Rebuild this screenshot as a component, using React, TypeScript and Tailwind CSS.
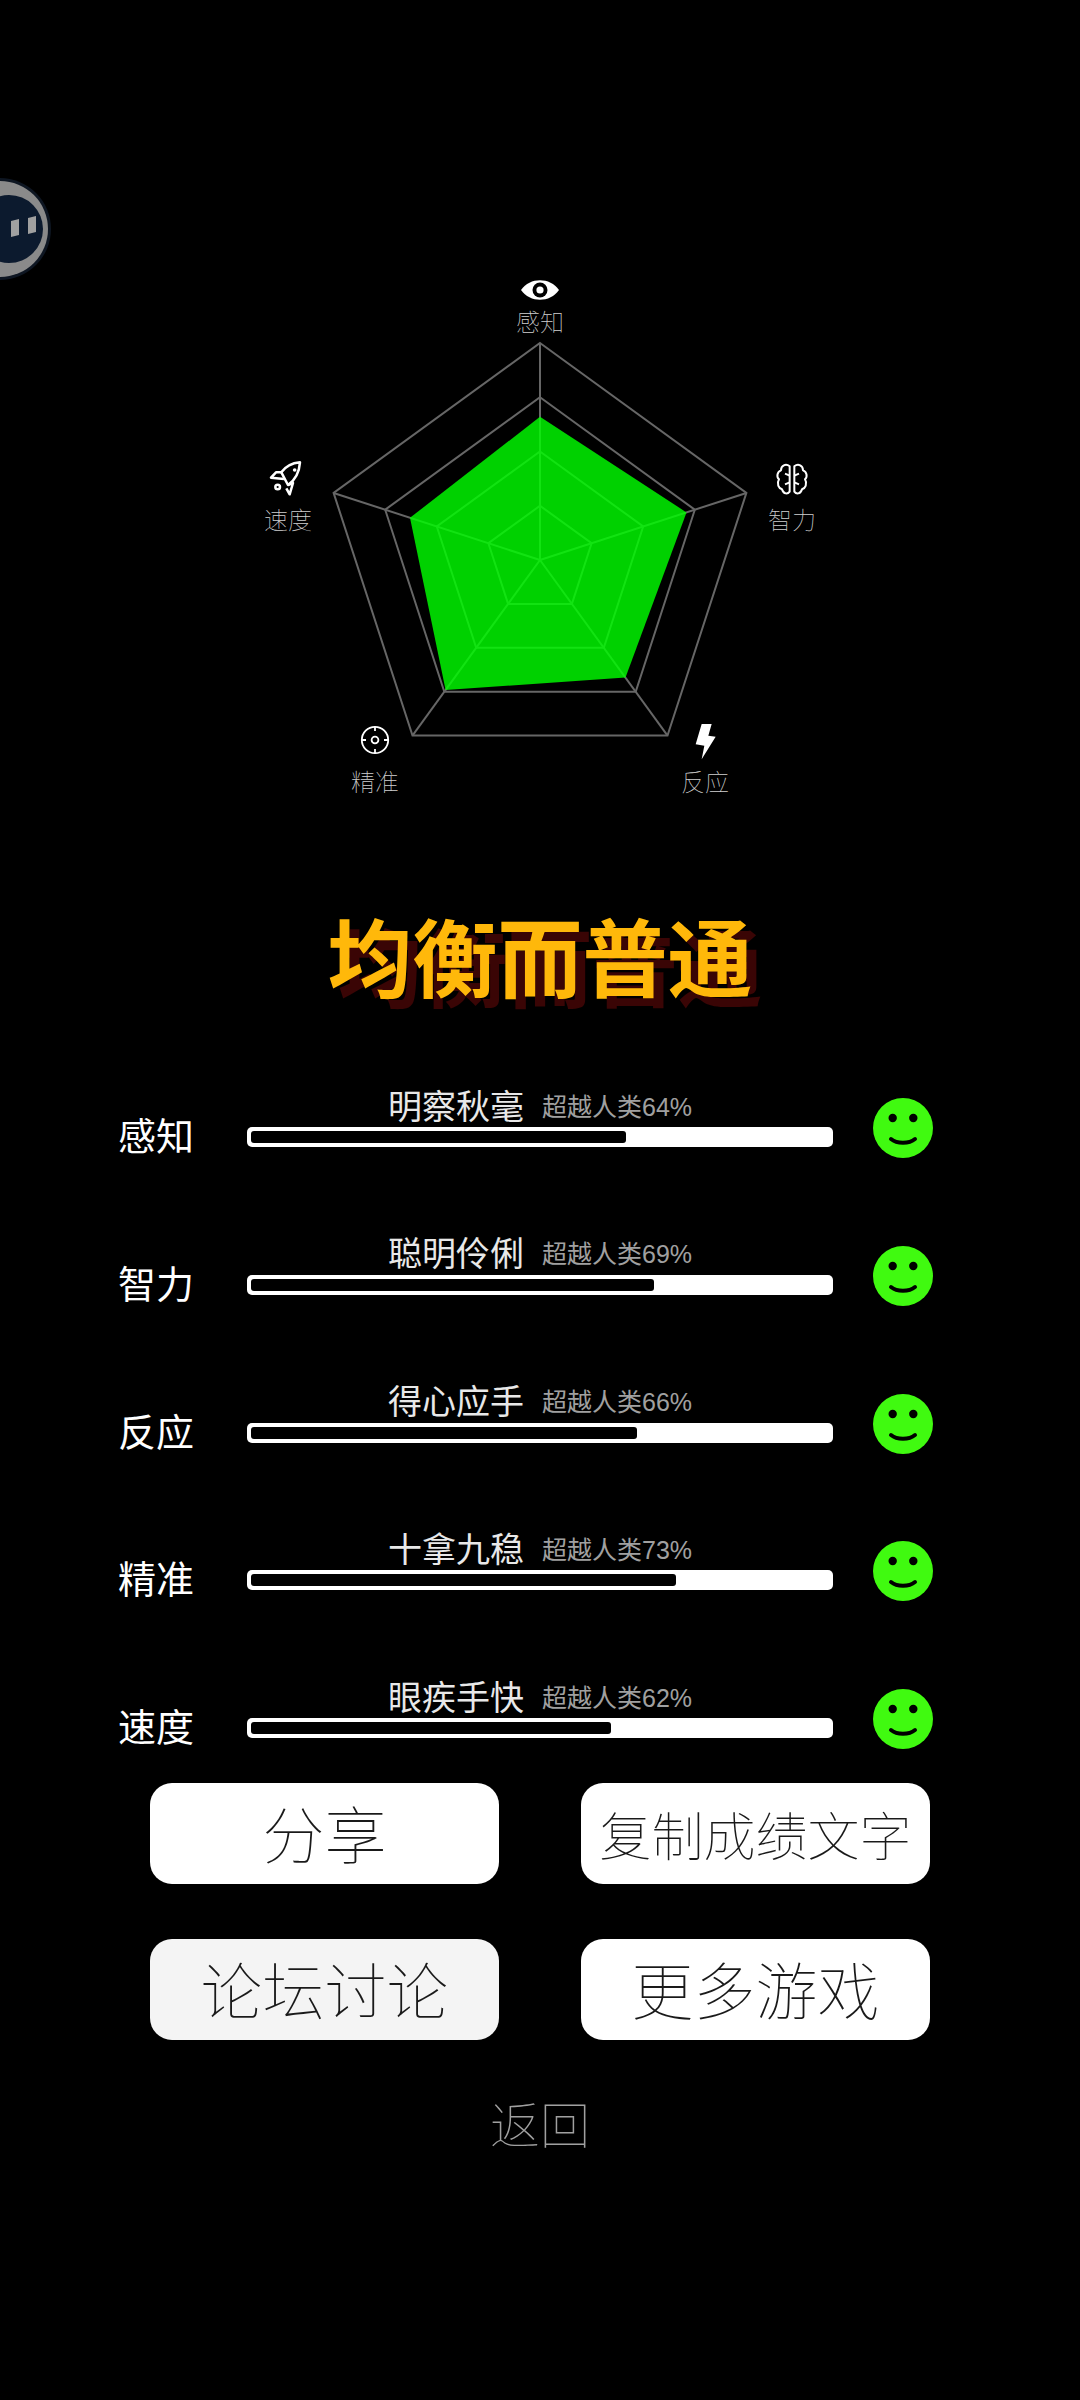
const FONT = "font-['Liberation_Sans','Noto_Sans_CJK_SC',sans-serif]";

const CX = 540;
const CY = 560;
const R = 217;

function pt(i: number, r: number): [number, number] {
  const a = -Math.PI / 2 + (i * 2 * Math.PI) / 5;
  return [CX + r * Math.cos(a), CY + r * Math.sin(a)];
}
function poly(rs: number[]) {
  return rs.map((r, i) => pt(i, r).map((n) => n.toFixed(1)).join(",")).join(" ");
}

const rows = [
  { name: "感知", title: "明察秋毫", pct: 64, fill: 64.8 },
  { name: "智力", title: "聪明伶俐", pct: 69, fill: 69.8 },
  { name: "反应", title: "得心应手", pct: 66, fill: 66.7 },
  { name: "精准", title: "十拿九稳", pct: 73, fill: 73.5 },
  { name: "速度", title: "眼疾手快", pct: 62, fill: 62.2 },
];
const radar = [0.66, 0.71, 0.67, 0.74, 0.63];

function ChartLabel({ x, y, children }: { x: number; y: number; children: string }) {
  return (
    <text x={x} y={y + 9} textAnchor="middle" fontSize={24} fontWeight={100} fill="#d0d0d0">
      {children}
    </text>
  );
}

function Radar() {
  return (
    <svg viewBox="0 260 1080 540" className={`block w-[1080px] h-[540px] ${FONT}`}>
      {[1, 2, 3, 4].map((k) => (
        <polygon key={k} points={poly([0, 1, 2, 3, 4].map(() => (R * k) / 4))} fill="none" stroke="#666" strokeWidth={2} />
      ))}
      {[0, 1, 2, 3, 4].map((i) => {
        const [x, y] = pt(i, R);
        return <line key={i} x1={CX} y1={CY} x2={x} y2={y} stroke="#666" strokeWidth={2} />;
      })}
      <polygon points={poly(radar.map((v) => v * R))} fill="#00ff00" fillOpacity={0.82} />

      {/* eye */}
      <path d="M521 290 C530 277 550 277 559 290 C550 303 530 303 521 290 Z" fill="#fff" />
      <circle cx={540} cy={290} r={7.5} fill="#000" />
      <circle cx={540} cy={290} r={3.6} fill="#fff" />
      <ChartLabel x={540} y={322}>感知</ChartLabel>

      {/* brain */}
      <g transform="translate(767 455) scale(0.3333)" fill="none" stroke="#fff" strokeWidth={6} strokeLinejoin="round">
        <path d="M68 34 C56 24 42 32 42 46 C30 50 28 66 36 73 C28 86 35 100 45 103 C50 118 62 118 68 110 Z" />
        <path d="M82 34 C94 24 108 32 108 46 C120 50 122 66 114 73 C122 86 115 100 105 103 C100 118 88 118 82 110 Z" />
        <path d="M68 62 L54 56 M68 82 L54 88 M82 62 L96 56 M82 82 L96 88" />
      </g>
      <ChartLabel x={792} y={520}>智力</ChartLabel>

      {/* bolt */}
      <g transform="translate(680 715) scale(0.3333)">
        <polygon points="65,27 95,27 85,62 107,65 65,133 73,92 47,88" fill="#fff" />
      </g>
      <ChartLabel x={705} y={782}>反应</ChartLabel>

      {/* target */}
      <g fill="none" stroke="#fff" strokeWidth={1.8}>
        <circle cx={375} cy={740} r={13.2} />
        <circle cx={375} cy={740} r={3.4} />
        <path d="M375 726.8 V731 M375 749 V753.2 M361.8 740 H366 M384 740 H388.2" />
      </g>
      <ChartLabel x={375} y={782}>精准</ChartLabel>

      {/* rocket */}
      <g transform="translate(262 455) scale(0.3333)" fill="none" stroke="#fff" strokeWidth={7.5} strokeLinejoin="round">
        <path d="M114 22 C92 24 70 35 58 52 L78 90 C98 76 112 50 114 22 Z" />
        <path d="M58 52 L42 52 L27 68 L66 72" />
        <path d="M78 90 L93 84 L83 118 L73 100" />
        <circle cx={47} cy={96} r={7} />
        <circle cx={98} cy={45} r={5.5} fill="#fff" stroke="none" />
      </g>
      <ChartLabel x={288} y={520}>速度</ChartLabel>
    </svg>
  );
}

function Smile() {
  return (
    <svg viewBox="0 0 60 60" className="w-[60px] h-[60px] mt-[13px] shrink-0">
      <circle cx={30} cy={30} r={30} fill="#40fa10" />
      <circle cx={19.7} cy={20} r={4.2} fill="#000" />
      <circle cx={40.3} cy={20} r={4.2} fill="#000" />
      <path d="M18 41 C24 46 36 46 42 41" fill="none" stroke="#000" strokeWidth={4} strokeLinecap="round" />
    </svg>
  );
}

function Row({ name, title, pct, fill }: { name: string; title: string; pct: number; fill: number }) {
  return (
    <div className="flex items-start h-[80px] pl-[118px]">
      <div className="w-[129px] mt-[27px] text-[38px] leading-[50px] text-white">{name}</div>
      <div className="w-[586px] shrink-0">
        <div className="flex items-center justify-center gap-[18px] h-[40px] pt-[3px]">
          <span className="text-[34px] leading-[40px] text-[#e8e8e8]">{title}</span>
          <span className="text-[25px] leading-[40px] text-[#a0a0a0]">超越人类{pct}%</span>
        </div>
        <div className="mt-[2px] h-[20px] rounded-[5px] bg-white p-[4px]">
          <div className="h-[12px] rounded-[3px] bg-black" style={{ width: `${fill}%` }} />
        </div>
      </div>
      <div className="ml-[39.5px]">
        <Smile />
      </div>
    </div>
  );
}

function Btn({ label, size, bg }: { label: string; size: string; bg: string }) {
  return (
    <button className={`w-[349px] h-[101px] pt-[8px] rounded-[22px] flex items-center justify-center font-thin text-[#1a1a1a] ${size} ${bg}`}>
      {label}
    </button>
  );
}

export default function App() {
  return (
    <div className={`relative w-[1080px] h-[2400px] overflow-hidden bg-black ${FONT}`}>
      <svg viewBox="0 0 60 110" className="absolute left-0 top-[174px] w-[60px] h-[110px]">
        <circle cx={0} cy={55} r={51} fill="#0e1622" />
        <circle cx={0} cy={55} r={48} fill="#8a8a8a" />
        <circle cx={9} cy={55} r={34} fill="#0c1a2e" />
        <polygon points="11,47 19,45 19,61 11,63" fill="#a0a0a0" />
        <polygon points="28,44 36,42 36,58 28,60" fill="#a0a0a0" />
      </svg>

      <div className="pt-[260px]">
        <Radar />
      </div>

      <h1 className="mt-[112px] h-[100px] text-center text-[85px] leading-[100px] font-bold text-[#ffb80a] [text-shadow:10px_10px_0_#3a0505]">
        均衡而普通
      </h1>

      <div className="mt-[73px] flex flex-col gap-[67.75px]">
        {rows.map((r) => (
          <Row key={r.name} {...r} />
        ))}
      </div>

      <div className="mt-[27px] ml-[150px] grid grid-cols-[349px_349px] gap-x-[82px] gap-y-[55px]">
        <Btn label="分享" size="text-[62px]" bg="bg-white" />
        <Btn label="复制成绩文字" size="text-[52px]" bg="bg-white" />
        <Btn label="论坛讨论" size="text-[62px]" bg="bg-[#f4f4f4]" />
        <Btn label="更多游戏" size="text-[62px]" bg="bg-white" />
      </div>

      <div className="mt-[52px] text-center text-[50px] leading-[70px] font-thin text-[#a0a0a0]">返回</div>
    </div>
  );
}
